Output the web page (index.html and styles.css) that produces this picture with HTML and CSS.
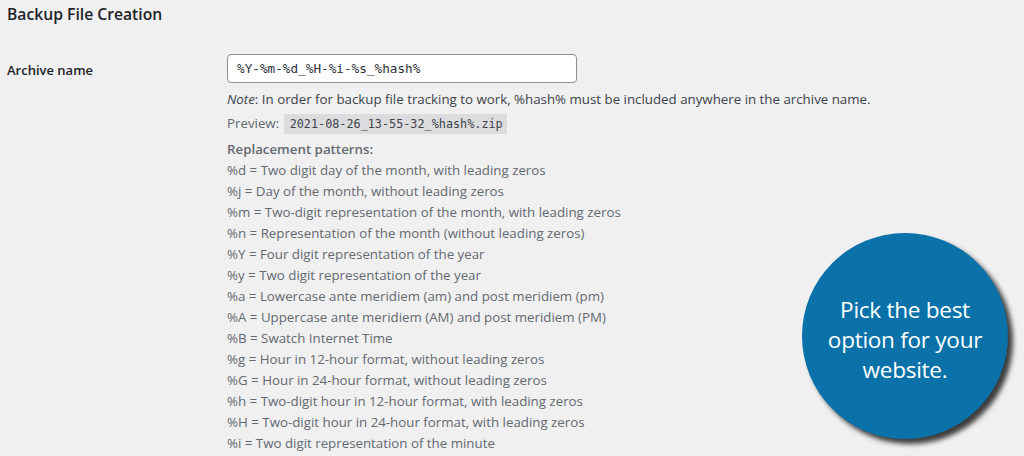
FILE: index.html
```html
<!DOCTYPE html>
<html lang="en">
<head>
  <meta charset="UTF-8" />
  <title>Backup File Creation</title>
  <link rel="stylesheet" href="styles.css">
</head>
<body>
  <main class="settings">
    <h2 class="section-title">Backup File Creation</h2>

    <div class="form-row">
      <div class="form-label">Archive name</div>
      <div class="form-field">
        <input type="text" class="text-input" value="%Y-%m-%d_%H-%i-%s_%hash%" />
        <p class="note"><em>Note</em>: In order for backup file tracking to work, %hash% must be included anywhere in the archive name.</p>
        <p class="preview">Preview: <code>2021-08-26_13-55-32_%hash%.zip</code></p>
        <div class="patterns">
          <strong>Replacement patterns:</strong>
          <div>%d = Two digit day of the month, with leading zeros</div>
          <div>%j = Day of the month, without leading zeros</div>
          <div>%m = Two-digit representation of the month, with leading zeros</div>
          <div>%n = Representation of the month (without leading zeros)</div>
          <div>%Y = Four digit representation of the year</div>
          <div>%y = Two digit representation of the year</div>
          <div>%a = Lowercase ante meridiem (am) and post meridiem (pm)</div>
          <div>%A = Uppercase ante meridiem (AM) and post meridiem (PM)</div>
          <div>%B = Swatch Internet Time</div>
          <div>%g = Hour in 12-hour format, without leading zeros</div>
          <div>%G = Hour in 24-hour format, without leading zeros</div>
          <div>%h = Two-digit hour in 12-hour format, with leading zeros</div>
          <div>%H = Two-digit hour in 24-hour format, with leading zeros</div>
          <div>%i = Two digit representation of the minute</div>
        </div>
      </div>
    </div>

    <!-- Callout bubble -->
    <div class="callout">Pick the best option for your website.</div>
  </main>
</body>
</html>
```

FILE: styles.css
```css
body {
  font-family: "Open Sans", "Noto Sans", sans-serif;
  font-size: 13.3px;
  background-color: #f0f0f1;
  color: #1d2327;
  margin: 0;
  overflow: hidden;
}
.settings {
  position: relative;
  padding: 0 7px;
  height: 456px;
}
.section-title {
  font-size: 15.7px;
  font-weight: 600;
  margin: 0;
  padding-top: 3px;
  line-height: 22px;
}
.form-row {
  display: flex;
  margin-top: 29px;
}
.form-label {
  width: 220px;
  flex-shrink: 0;
  font-size: 13px;
  font-weight: 600;
  padding-top: 7px;
}
.form-field {
  flex: 1;
}
.text-input {
  display: block;
  box-sizing: border-box;
  width: 350px;
  height: 29px;
  padding: 0 9px;
  border: 1px solid #8c8f94;
  border-radius: 4px;
  background: #fff;
  font-family: "DejaVu Sans Mono", monospace;
  font-size: 12.7px;
  color: #2c3338;
}
.note {
  margin: 6px 0 0;
  line-height: 20px;
  color: #3c434a;
}
.preview {
  margin: 4px 0 0;
  line-height: 20px;
  color: #646970;
}
.preview code {
  font-family: "DejaVu Sans Mono", monospace;
  font-size: 11.8px;
  background: #dcdcde;
  color: #3c434a;
  padding: 3px 4px 3px 6px;
  margin-left: 1px;
}
.patterns {
  margin-top: 5px;
  color: #646970;
  line-height: 21px;
}
.patterns strong {
  display: block;
  font-weight: 600;
}
.callout {
  position: absolute;
  left: 802px;
  top: 233px;
  width: 206px;
  height: 206px;
  box-sizing: border-box;
  padding: 8px 20px 0;
  border-radius: 50%;
  background-color: #0a72a8;
  box-shadow: 5px 5px 5px rgba(0, 0, 0, 0.75);
  color: #fff;
  font-family: "Open Sans", sans-serif;
  font-size: 22.6px;
  line-height: 30px;
  letter-spacing: -0.3px;
  display: flex;
  align-items: center;
  justify-content: center;
  text-align: center;
}
```
